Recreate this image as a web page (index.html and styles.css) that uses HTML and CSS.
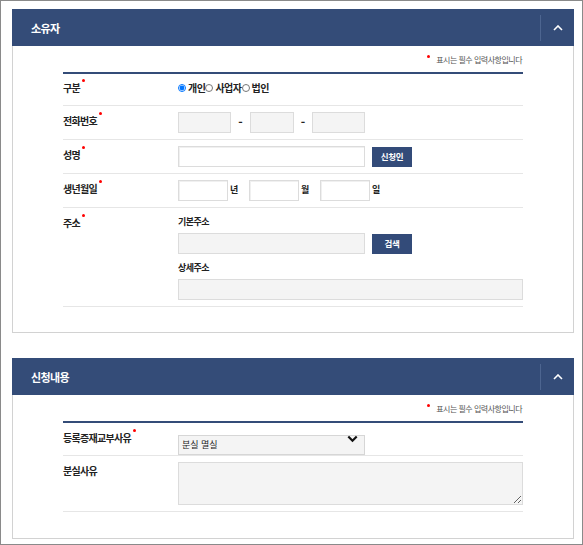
FILE: index.html
```html
<!DOCTYPE html>
<html lang="ko">
<head>
<meta charset="utf-8">
<link rel="stylesheet" href="styles.css">
</head>
<body>
<div class="frame">
  <section class="panel">
    <div class="panel-head">
      <h2 class="panel-title">소유자</h2>
      <button class="toggle" type="button" aria-label="접기">
        <svg width="10" height="6" viewBox="0 0 10 6"><path d="M1 5 L5 1 L9 5" fill="none" stroke="#fff" stroke-width="1.6"/></svg>
      </button>
    </div>
    <div class="panel-body">
      <p class="note"><span class="dot note-dot"></span>표시는 필수 입력사항입니다</p>
      <div class="form">
        <div class="row row-short">
          <div class="label">구분<span class="dot"></span></div>
          <div class="field radios">
            <label class="radio"><input type="radio" name="kind" checked>개인</label>
            <label class="radio"><input type="radio" name="kind"> 사업자</label>
            <label class="radio"><input type="radio" name="kind"> 법인</label>
          </div>
        </div>
        <div class="row">
          <div class="label">전화번호<span class="dot"></span></div>
          <div class="field">
            <input class="inp gray w53" type="text">
            <span class="dash d19">-</span>
            <input class="inp gray w44" type="text">
            <span class="dash d18">-</span>
            <input class="inp gray w53" type="text">
          </div>
        </div>
        <div class="row">
          <div class="label">성명<span class="dot"></span></div>
          <div class="field">
            <input class="inp white w187" type="text">
            <button class="btn" type="button">신청인</button>
          </div>
        </div>
        <div class="row">
          <div class="label">생년월일<span class="dot"></span></div>
          <div class="field">
            <input class="inp white w50" type="text"><span class="unit">년</span>
            <input class="inp white w50" type="text"><span class="unit">월</span>
            <input class="inp white w50" type="text"><span class="unit">일</span>
          </div>
        </div>
        <div class="row row-top">
          <div class="label">주소<span class="dot"></span></div>
          <div class="field stack">
            <div class="sub">기본주소</div>
            <div class="line">
              <input class="inp gray w187" type="text">
              <button class="btn" type="button">검색</button>
            </div>
            <div class="sub sub2">상세주소</div>
            <input class="inp gray wfull" type="text">
          </div>
        </div>
      </div>
    </div>
  </section>

  <section class="panel panel2">
    <div class="panel-head">
      <h2 class="panel-title">신청내용</h2>
      <button class="toggle" type="button" aria-label="접기">
        <svg width="10" height="6" viewBox="0 0 10 6"><path d="M1 5 L5 1 L9 5" fill="none" stroke="#fff" stroke-width="1.6"/></svg>
      </button>
    </div>
    <div class="panel-body">
      <p class="note"><span class="dot note-dot"></span>표시는 필수 입력사항입니다</p>
      <div class="form">
        <div class="row row-select">
          <div class="label">등록증재교부사유<span class="dot"></span></div>
          <div class="field">
            <div class="select-wrap">
              <select class="sel">
                <option>분실 멸실</option>
              </select>
              <svg class="sel-arrow" width="11" height="8" viewBox="0 0 11 8"><path d="M1.3 1.5 L5.5 5.7 L9.7 1.5" fill="none" stroke="#111" stroke-width="2.2"/></svg>
            </div>
          </div>
        </div>
        <div class="row row-top row-area">
          <div class="label">분실사유</div>
          <div class="field">
            <textarea class="area"></textarea>
          </div>
        </div>
      </div>
    </div>
  </section>
</div>
</body>
</html>
```
FILE: styles.css
```css
* { box-sizing: border-box; }
html, body { margin: 0; padding: 0; background: #fff; }
body {
  font-family: "Noto Sans CJK KR", "Noto Sans", sans-serif;
  color: #222;
}
.frame {
  width: 583px;
  height: 545px;
  border: 1px solid #8a8a8a;
  padding: 8px 8px 0 11px;
  overflow: hidden;
}
.panel2 { margin-top: 25px; }
.panel-head {
  height: 37px;
  background: #344c78;
  display: flex;
  align-items: center;
  justify-content: space-between;
  padding-left: 19px;
}
.panel-title {
  margin: 0;
  color: #fff;
  font-size: 11px;
  font-weight: 700;
  letter-spacing: -0.6px;
}
.toggle {
  width: 34px;
  height: 26px;
  border: 0;
  border-left: 1px solid #4d6590;
  background: transparent;
  padding: 0;
  display: flex;
  align-items: center;
  justify-content: center;
}
.panel-body {
  border: 1px solid #d2d2d2;
  border-top: 0;
  padding: 0 50px 25px 50px;
}
.panel2 .panel-body { padding-bottom: 26px; }
.note {
  margin: 0;
  height: 26px;
  display: flex;
  align-items: center;
  justify-content: flex-end;
  font-size: 8px;
  color: #555;
  letter-spacing: -0.5px;
  padding-right: 1px;
}
.dot {
  display: inline-block;
  width: 3px;
  height: 3px;
  border-radius: 50%;
  background: #f00;
  vertical-align: top;
  margin-left: 2px;
  margin-top: -2px;
}
.note-dot { margin: -6px 6px 0 0; vertical-align: middle; }
.form { border-top: 2px solid #344c78; }
.row {
  display: flex;
  align-items: center;
  height: 34px;
  border-bottom: 1px solid #e6e6e6;
}
.row-short { height: 32px; }
.row-select { height: 33px; }
.row-top { align-items: flex-start; height: auto; }
.label {
  width: 115px;
  flex: none;
  font-size: 10px;
  font-weight: 700;
  letter-spacing: -0.7px;
  color: #222;
  line-height: 14px;
  padding-bottom: 3px;
}
.row-top .label { padding-top: 8px; padding-bottom: 0; }
.field {
  display: flex;
  align-items: center;
  flex: 1;
}
.radios {
  font-size: 10px;
  font-weight: 700;
  letter-spacing: -0.5px;
  padding-bottom: 4px;
}
.radio { display: inline-flex; align-items: center; }
.radio input {
  width: 8px;
  height: 8px;
  margin: 0 2px 0 0;
}
.inp {
  height: 21px;
  border: 1px solid #dcdcdc;
  padding: 0 3px;
  font: inherit;
  font-size: 9px;
  outline: none;
}
.gray { background: #f4f4f4; }
.white { background: #fff; box-shadow: inset 1px 1px 0 #f0f0f0; }
.w53 { width: 53px; }
.w44 { width: 44px; }
.w50 { width: 50px; }
.w187 { width: 187px; }
.wfull { width: 345px; }
.dash {
  text-align: center;
  font-size: 12px;
  font-weight: 700;
  line-height: 12px;
  padding-bottom: 2px;
}
.d19 { width: 19px; }
.d18 { width: 18px; }
.unit {
  width: 10px;
  font-size: 9px;
  font-weight: 700;
  margin: 0 9px 0 2px;
  padding-bottom: 2px;
}
.btn {
  width: 40px;
  height: 20px;
  margin-left: 7px;
  border: 0;
  background: #334b79;
  color: #fff;
  font-family: inherit;
  font-size: 8.5px;
  font-weight: 700;
  letter-spacing: -0.4px;
  padding: 0 0 1px;
}
.stack {
  flex-direction: column;
  align-items: flex-start;
  padding: 6px 0 6px;
}
.sub {
  height: 19px;
  line-height: 16px;
  font-size: 9px;
  font-weight: 700;
  letter-spacing: -0.5px;
}
.sub2 { margin-top: 4px; height: 21px; line-height: 19px; }
.line { display: flex; align-items: center; }
.select-wrap { position: relative; width: 187px; height: 20px; }
.sel {
  appearance: none;
  -webkit-appearance: none;
  width: 187px;
  height: 20px;
  border: 1px solid #d6d6d6;
  background: #f4f4f4;
  font-family: inherit;
  font-size: 9px;
  color: #222;
  padding: 0 3px;
  border-radius: 0;
  outline: none;
}
.sel-arrow { position: absolute; right: 7px; top: 6px; }
.row-area .field { padding: 6px 0; }
.area {
  width: 345px;
  height: 43px;
  border: 1px solid #dcdcdc;
  background: #f4f4f4;
  display: block;
  outline: none;
}
```
